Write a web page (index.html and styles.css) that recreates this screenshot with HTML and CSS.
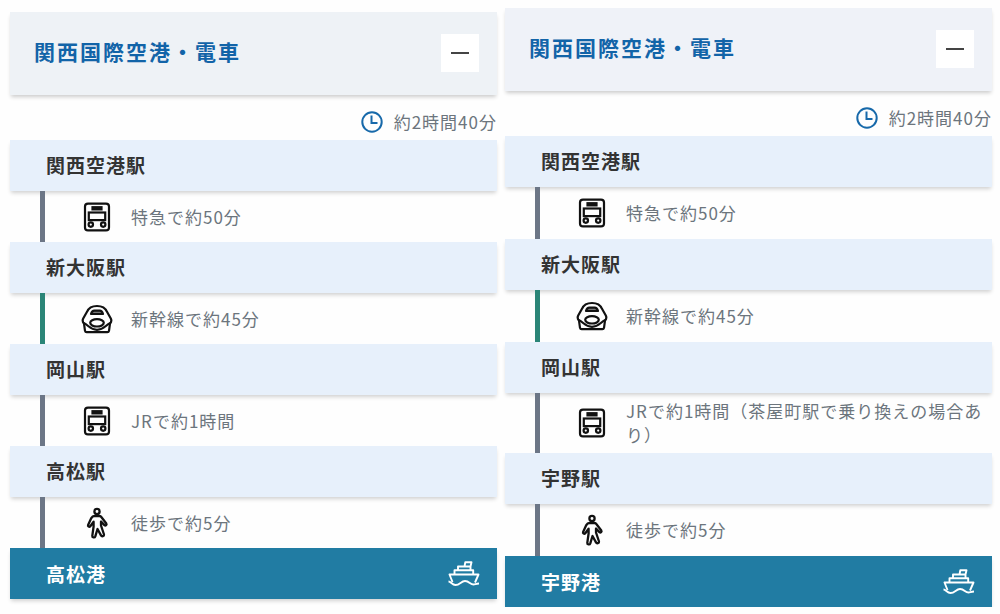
FILE: index.html
```html
<!DOCTYPE html>
<html lang="ja">
<head>
<meta charset="utf-8">
<meta name="viewport" content="width=device-width, initial-scale=1">
<title>関西国際空港・電車</title>
<link rel="stylesheet" href="styles.css">
</head>
<body>
<svg class="sprite" aria-hidden="true">
  <symbol id="clock" viewBox="0 0 22 22"><g fill="none" stroke="currentColor" stroke-width="2"><circle cx="11" cy="11" r="9.700"/><path d="M10.500 4.500v7.500h6"/></g></symbol>
  <symbol id="train" viewBox="0 0 32 32"><g fill="none" stroke="currentColor" stroke-width="2.200"><rect x="4" y="2.600" width="24" height="26.800" rx="3"/><rect x="11.500" y="6.200" width="9" height="2.200" fill="#555"/><rect x="7.800" y="11.500" width="16.400" height="7.600"/><circle cx="9.800" cy="23.600" r="2.200"/><circle cx="22.200" cy="23.600" r="2.200"/></g></symbol>
  <symbol id="shinkansen" viewBox="0 0 32 32"><g fill="none" stroke="currentColor" stroke-width="2.200" stroke-linejoin="round"><path d="M16 3C10.500 3 7.500 5.200 6 8.800L2.200 15.500c-1 2-.5 3.700.8 5.200L4 27.800c.2.900.7 1.400 1.600 1.400h20.800c.9 0 1.400-.5 1.600-1.400l1-7.100c1.300-1.500 1.800-3.200.8-5.200L26 8.800C24.500 5.200 21.500 3 16 3z"/><path d="M2.800 20C7.500 22 9 26.800 16 26.800S24.500 22 29.200 20"/><ellipse cx="16" cy="19.800" rx="6.800" ry="3.700"/><path d="M10 11c.7-2.300 1.900-3.300 3.300-3.300h5.400c1.400 0 2.600 1 3.300 3.300z" fill="#777"/></g></symbol>
  <symbol id="walk" viewBox="0 0 32 32"><g fill="none" stroke="currentColor" stroke-width="2.300" stroke-linejoin="round"><circle cx="16" cy="4.500" r="2.600"/><path d="M13.500 9h5c1 0 1.500.4 2 1.300l4.800 6.200c.8 1.300-.7 2.600-1.900 1.600l-3.400-3.600v4l3 9c.3 1.700-2.200 2.400-3 .9L16.500 22l-2.200 7.400c-.6 1.700-3.200 1.200-3-.6l1.300-9.300v-4.800l-3.300 4.500c-1 1.200-2.800.1-2.200-1.300l3.200-6.800c.7-1.300 1.700-2.100 3.200-2.100z"/></g></symbol>
  <symbol id="ship" viewBox="0 0 34 28"><g fill="none" stroke="currentColor" stroke-width="1.900" stroke-linejoin="round"><path d="M1.500 21.500c2.500 0 3.500 3.500 7 3.500 4.500 0 5.500-4 9.500-4 4.500 0 5 3.500 8.500 3.500 1.800 0 2.500-1 5.500-1"/><path d="M5.500 22L2.500 14.500h29L28 22.500"/><path d="M7.500 14.500v-4.200h18.700v4.200M11 10.300V6.500h12.500v3.800M17.500 6.500l.8-4.200h6.200l-1 4.200"/></g></symbol>
</svg>
<main class="routes">
  <section class="route">
    <header class="route-header">
      <h2 class="route-title">関西国際空港・電車</h2>
      <button class="toggle" type="button" aria-label="閉じる" aria-expanded="true"><span class="minus"></span></button>
    </header>
    <p class="duration"><svg class="clock"><use href="#clock"/></svg>約2時間40分</p>
    <h3 class="station">関西空港駅</h3>
    <div class="leg"><svg class="icon"><use href="#train"/></svg><p class="leg-text">特急で約50分</p></div>
    <h3 class="station">新大阪駅</h3>
    <div class="leg leg-green"><svg class="icon"><use href="#shinkansen"/></svg><p class="leg-text">新幹線で約45分</p></div>
    <h3 class="station">岡山駅</h3>
    <div class="leg"><svg class="icon"><use href="#train"/></svg><p class="leg-text">JRで約1時間</p></div>
    <h3 class="station">高松駅</h3>
    <div class="leg"><svg class="icon"><use href="#walk"/></svg><p class="leg-text">徒歩で約5分</p></div>
    <h3 class="station port">高松港<svg class="ship"><use href="#ship"/></svg></h3>
  </section>
  <section class="route route-alt">
    <header class="route-header">
      <h2 class="route-title">関西国際空港・電車</h2>
      <button class="toggle" type="button" aria-label="閉じる" aria-expanded="true"><span class="minus"></span></button>
    </header>
    <p class="duration"><svg class="clock"><use href="#clock"/></svg>約2時間40分</p>
    <h3 class="station">関西空港駅</h3>
    <div class="leg"><svg class="icon"><use href="#train"/></svg><p class="leg-text">特急で約50分</p></div>
    <h3 class="station">新大阪駅</h3>
    <div class="leg leg-green"><svg class="icon"><use href="#shinkansen"/></svg><p class="leg-text">新幹線で約45分</p></div>
    <h3 class="station">岡山駅</h3>
    <div class="leg"><svg class="icon"><use href="#train"/></svg><p class="leg-text">JRで約1時間（茶屋町駅で乗り換えの場合あり）</p></div>
    <h3 class="station">宇野駅</h3>
    <div class="leg"><svg class="icon"><use href="#walk"/></svg><p class="leg-text">徒歩で約5分</p></div>
    <h3 class="station port">宇野港<svg class="ship"><use href="#ship"/></svg></h3>
  </section>
</main>
</body>
</html>
```
FILE: styles.css
```css
* { box-sizing: border-box; }

body {
  margin: 0;
  background: #fefefe;
  color: #333;
  font-family: "Noto Sans CJK JP", sans-serif;
  font-size: 17px;
  line-height: 24px;
  letter-spacing: 1px;
}

h2, h3, p { margin: 0; }

.sprite { display: none; }

.routes {
  display: flex;
  align-items: flex-start;
  gap: 8px;
  padding: 8px 8px 0 10px;
}

.route {
  --leg-height: 51px;
  --header-color: #eef2f6;
  flex: 1 1 0;
  min-width: 0;
  margin-top: 4px;
}

.route-alt {
  --leg-height: 52px;
  --header-color: #eff2f8;
  margin-top: 0;
}

.route-header {
  display: flex;
  align-items: center;
  justify-content: space-between;
  min-height: 83px;
  padding: 0 18px 2px 24px;
  background: var(--header-color);
  box-shadow: 0 3px 4px -1px rgba(0, 0, 0, 0.2);
}

.route-title {
  padding-bottom: 4px;
  color: #1264a8;
  font-size: 21px;
  font-weight: 700;
  line-height: 32px;
  letter-spacing: 2px;
}

.toggle {
  display: grid;
  place-items: center;
  width: 38px;
  height: 38px;
  padding: 0;
  border: 0;
  background: #fff;
}

.minus {
  width: 18px;
  height: 2px;
  background: #444;
}

.duration {
  display: flex;
  align-items: center;
  justify-content: flex-end;
  gap: 11px;
  min-height: 45px;
  padding-top: 8px;
  color: #6c757d;
}

.clock {
  width: 22px;
  height: 22px;
  color: #1769aa;
}

.station {
  display: flex;
  align-items: center;
  justify-content: space-between;
  min-height: 51px;
  padding: 0 16px 2px 36px;
  background: #e7f0fb;
  box-shadow: 0 3px 4px -1px rgba(0, 0, 0, 0.18);
  font-size: 19px;
  font-weight: 700;
}

.leg {
  display: flex;
  align-items: center;
  gap: 18px;
  min-height: var(--leg-height);
  margin-left: 30px;
  padding: 6px 0 6px 36px;
  border-left: 5px solid #6c7686;
}

.leg-green { border-left-color: #2b8577; }

.icon {
  flex: none;
  width: 32px;
  height: 32px;
  color: #111;
}

.leg-text { color: #6c757d; }

.port {
  padding-bottom: 0;
  background: #217ca3;
  color: #fff;
}

.ship {
  width: 34px;
  height: 28px;
}
```
